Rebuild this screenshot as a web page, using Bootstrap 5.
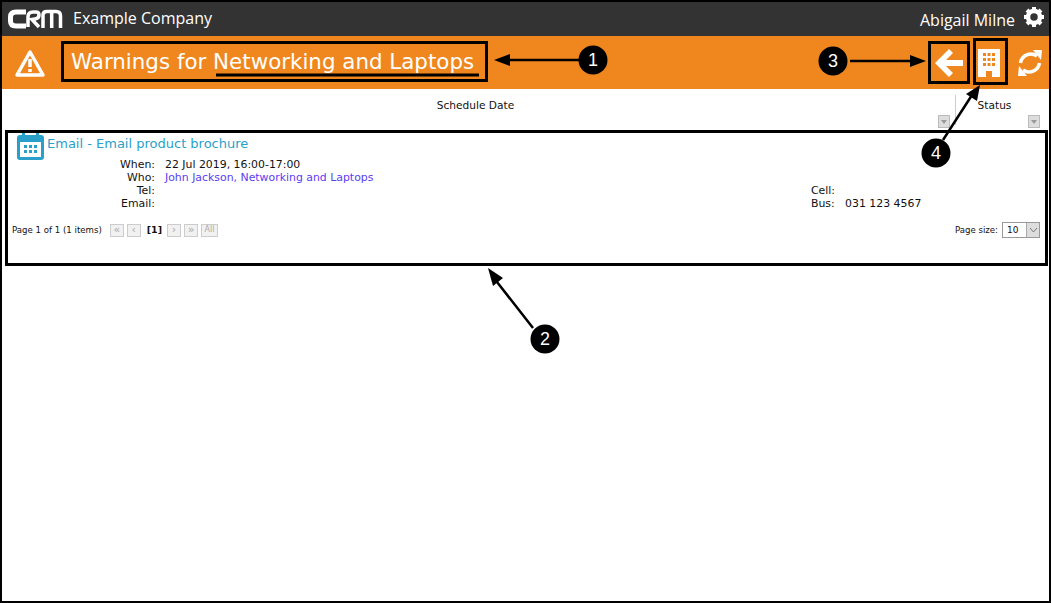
<!DOCTYPE html>
<html lang="en"><head><meta charset="utf-8"><title>Warnings</title>
<link href="https://cdn.jsdelivr.net/npm/bootstrap@5.3.0/dist/css/bootstrap.min.css" rel="stylesheet">
<style>
html,body{height:100%;margin:0;background:#fff}
body{font-family:"DejaVu Sans",sans-serif;overflow:hidden}
.frame{position:relative;width:1051px;height:603px;border:2px solid #000;overflow:hidden;color:#111}
.topbar{height:34px;background:#333;color:#fff;padding:0 4px 0 6px}
.company{font-family:"Open Sans",sans-serif;font-size:16px;margin-left:10px;padding-bottom:2px}
.user{font-family:"Open Sans",sans-serif;font-size:16px;margin-right:8px;padding-top:2px}
.titlebar{height:53px;background:#f0871e;color:#fff;padding:0 6px 0 12px}
.pagetitle{font-size:21.4px;margin-left:25px;white-space:nowrap}
.heads{height:41px;font-size:10.6px;position:relative}
.hcol1{width:953px;text-align:center;padding-top:9px;padding-right:6px}
.hcol2{width:94px;border-left:1px solid #ccc;height:30px;margin-top:6px;padding-top:3px;text-align:center;padding-right:16px}
.sortbtn{width:12px;height:13px;background:#ddd;border:1px solid #bbb;display:flex;align-items:center;justify-content:center}
.sb1{margin:2px 0 0 936px}.sb2{margin:2px 0 0 1026px}
.sortrow{position:absolute;left:0;top:24px}
.entry{padding:2px 3px 0 15px;font-size:10.9px;height:136px}
.entryhead{height:28px}
.entrytitle{font-size:13px;color:#2a9fc9;margin-left:3px;padding-top:2px}
.labels{width:138px;flex:none;text-align:right;margin-right:10px;line-height:13px}
.vals{line-height:13px;width:646px;flex:none}
.who{color:#5a3cf0}
.infogrid{margin-top:-2px}
.pager{font-size:8.6px;margin-top:12px;padding-right:6px;margin-left:-5px}
.pgb{display:flex;align-items:center;justify-content:center;width:14px;border:1px solid #ccc;background:#f1f1f1;color:#aaa;font-size:11px;height:13px;margin-right:3px}
.pgb.wide{width:17px;font-size:8px}
.cur{font-weight:700;font-size:9.5px;margin:0 5px 0 3px}
.psel{width:38px;height:16px;border:1px solid #999;font-size:9px;padding:1px 0 0 4px;margin-left:4px;position:relative;background:#fff}
.psel i{position:absolute;right:0;top:0;width:13px;height:14px;background:#ddd;border-left:1px solid #aaa;display:flex;align-items:center;justify-content:center}
.ico-back{margin-right:13px}
.ico-bld{margin-right:16px}
.anno{position:absolute;left:-2px;top:-2px;pointer-events:none}
.anno text{font-family:"Liberation Sans",sans-serif;font-size:18px;fill:#fff;text-anchor:middle}
</style></head><body>
<div class="frame">
 <div class="topbar d-flex align-items-center">
  <svg width="55" height="20" viewBox="0 0 55 20"><path d="M18 3H8Q2.500 3 2.500 8v4Q2.500 17 8 17H18" fill="none" stroke="#fff" stroke-width="5"/><path d="M20 18V8Q20 3 25 3H28Q31 3 31 6Q31 9.500 27 10L24 10.500L31 18" fill="none" stroke="#fff" stroke-width="3.500"/><path d="M35 19V6Q35 2.500 39 2.500H48Q52.500 2.500 52.500 7V19M43.700 19V3" fill="none" stroke="#fff" stroke-width="3.500"/></svg>
  <span class="company">Example Company</span>
  <span class="user ms-auto">Abigail Milne</span>
  <svg width="22" height="22" viewBox="0 0 22 22" class="mb-1"><circle cx="11" cy="11" r="6" fill="none" stroke="#fff" stroke-width="4.500"/><g stroke="#fff" stroke-width="4"><path d="M11 1v4M11 17v4M1 11h4M17 11h4M4 4l3 3M15 15l3 3M18 4l-3 3M7 15l-3 3"/></g></svg>
 </div>
 <div class="titlebar d-flex align-items-center">
  <svg width="32" height="30" viewBox="0 0 32 30"><path d="M16 4L29 27H3Z" fill="none" stroke="#fff" stroke-width="3.500" stroke-linejoin="round"/><path d="M16 11v8M16 21v3" stroke="#fff" stroke-width="3.500"/></svg>
  <span class="pagetitle">Warnings for Networking and Laptops</span>
  <div class="ms-auto d-flex align-items-center">
   <svg width="30" height="30" viewBox="0 0 30 30" class="ico-back"><path d="M15 1L1 15L15 29L19 25L12 18H29V12H12L19 5Z" fill="#fff"/></svg>
   <svg width="24" height="30" viewBox="0 0 24 30" class="ico-bld"><path fill="#fff" fill-rule="evenodd" d="M1 1H23V29H15V23H9V29H1ZM6 5v3h3V5ZM10.500 5v3h3V5ZM15 5v3h3V5ZM6 10v3h3v-3ZM10.500 10v3h3v-3ZM15 10v3h3v-3ZM6 15v3h3v-3ZM10.500 15v3h3v-3ZM15 15v3h3v-3Z"/></svg>
   <svg width="26" height="28" viewBox="0 0 26 28"><path d="M20 7A10.500 10.500 0 0 0 3.500 14M6 21A10.500 10.500 0 0 0 22.500 14" fill="none" stroke="#fff" stroke-width="3.500"/><path d="M16 1L25 1L24 11ZM10 27L1 27L2 17Z" fill="#fff"/></svg>
  </div>
 </div>
 <div class="heads d-flex">
  <div class="hcol1">Schedule Date</div>
  <div class="hcol2">Status</div>
  <div class="sortrow"><i class="sortbtn sb1"><svg width="6" height="4" viewBox="0 0 6 4"><path d="M0 0H6L3 4Z" fill="#999"/></svg></i></div>
  <div class="sortrow"><i class="sortbtn sb2"><svg width="6" height="4" viewBox="0 0 6 4"><path d="M0 0H6L3 4Z" fill="#999"/></svg></i></div>
 </div>
 <div class="entry">
  <div class="entryhead d-flex">
   <svg width="27" height="28" viewBox="0 0 27 28"><path fill="#2a9fc9" fill-rule="evenodd" d="M3 3H5V0h3v3h11V0h3v3h2a3 3 0 0 1 3 3V25a3 3 0 0 1-3 3H3a3 3 0 0 1-3-3V6a3 3 0 0 1 3-3ZM3 10V25H24V10Z"/><path fill="#2a9fc9" d="M7 13h3v3H7zM12 13h3v3h-3zM17 13h3v3h-3zM7 18h3v3H7zM12 18h3v3h-3zM17 18h3v3h-3z"/></svg>
   <span class="entrytitle">Email - Email product brochure</span>
  </div>
  <div class="infogrid d-flex">
   <div class="labels">When:<br>Who:<br>Tel:<br>Email:</div>
   <div class="vals">22 Jul 2019, 16:00-17:00<br><span class="who">John Jackson, Networking and Laptops</span></div>
   <div class="vals"><br><br>Cell:<br>Bus: &nbsp; 031 123 4567</div>
  </div>
  <div class="pager d-flex align-items-center">
   <span class="me-2">Page 1 of 1 (1 items)</span>
   <span class="pgb">«</span><span class="pgb">‹</span><span class="cur">[1]</span><span class="pgb">›</span><span class="pgb">»</span><span class="pgb wide">All</span>
   <span class="ms-auto">Page size:</span><span class="psel">10<i><svg width="7" height="4" viewBox="0 0 7 4"><path d="M0 0L3.500 4L7 0" fill="none" stroke="#777"/></svg></i></span>
  </div>
 </div>
 <svg class="anno" width="1051" height="603" viewBox="0 0 1051 603">
  <g fill="none" stroke="#000" stroke-width="3">
   <rect x="62.500" y="42.500" width="424" height="38"/>
   <rect x="6.500" y="131.500" width="1040" height="133"/>
   <rect x="929.500" y="42.500" width="39" height="40"/>
   <rect x="974.500" y="39.500" width="32" height="44"/>
  </g>
  <path d="M216 75H479" stroke="#000" stroke-width="3"/>
  <g stroke="#000" stroke-width="2.500">
   <path d="M510 60H580M850 61H912M943 140L972 95M533 328L497 282"/>
  </g>
  <g fill="#000">
   <path d="M494 60L510 54V66Z"/><path d="M926 61L910 55V67Z"/><path d="M980 85L966 94L977 101Z"/><path d="M488 268L503 278L493 286Z"/>
   <circle cx="593" cy="60" r="14.500"/><circle cx="833" cy="61" r="14.500"/><circle cx="936" cy="153" r="14.500"/><circle cx="545" cy="339" r="14.500"/>
  </g>
  <text x="593" y="66">1</text><text x="833" y="67">3</text><text x="936" y="159">4</text><text x="545" y="345">2</text>
 </svg>
</div>
</body></html>
